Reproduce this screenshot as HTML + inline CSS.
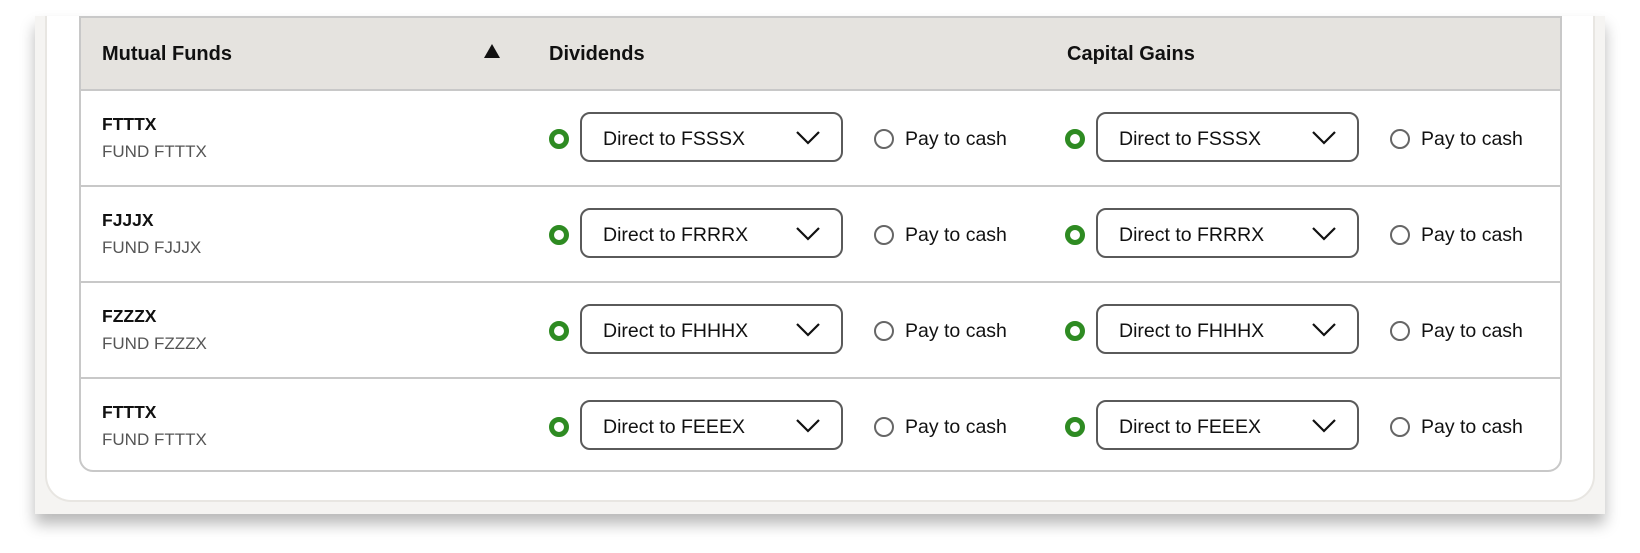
<!DOCTYPE html>
<html><head><style>
*{box-sizing:border-box;margin:0;padding:0}
body{width:1640px;height:553px;background:#fff;position:relative;overflow:hidden;font-family:"Liberation Sans",sans-serif;color:#111}
.panel{position:absolute;left:35px;top:16px;width:1570px;height:498px;background:#f5f4f2;box-shadow:0 10px 14px rgba(0,0,0,0.28)}
.card{position:absolute;left:45px;top:16px;width:1550px;height:486px;background:#fff;border:2px solid #e8e6e2;border-top:none;border-radius:0 0 26px 26px}
.table{position:absolute;left:79px;top:16px;width:1483px;height:456px;border:2px solid #c8c8c8;border-radius:0 0 14px 14px;overflow:hidden}
.hdr{position:absolute;left:0;top:0;width:100%;height:73px;background:#e5e3df;border-bottom:2px solid #c8c8c8}
.h{position:absolute;top:25px;font-size:20px;font-weight:bold}
.row{position:absolute;left:0;width:100%;height:96px;border-bottom:2px solid #c8c8c8}
.row:last-child{border-bottom:none}
.tk{position:absolute;left:21px;top:23px;font-size:17.5px;font-weight:bold}
.fn{position:absolute;left:21px;top:51px;font-size:17px;color:#555}
.rg{position:absolute;width:20px;height:20px;border-radius:50%;border:5.5px solid #2e8b22;top:38px}
.rw{position:absolute;width:20px;height:20px;border-radius:50%;border:2px solid #666;top:38px}
.sel{position:absolute;width:263px;height:50px;border:2px solid #5a5a5a;border-radius:10px;top:21px}
.sel span{position:absolute;left:21px;top:14px;font-size:19.5px}
.sel svg{position:absolute;right:20px;top:16px}
.pt{position:absolute;top:37px;font-size:19.5px}
</style></head><body>
<div class="panel"></div>
<div class="card"></div>
<div class="table">
<div class="hdr">
<div class="h" style="left:21px">Mutual Funds</div>
<svg style="position:absolute;left:403px;top:26px" width="16" height="14"><polygon points="8,0 16,14 0,14" fill="#111"/></svg>
<div class="h" style="left:468px">Dividends</div>
<div class="h" style="left:986px">Capital Gains</div>
</div>
<div class="row" style="top:73px"><div class="tk">FTTTX</div><div class="fn">FUND FTTTX</div>
<div class="rg" style="left:468px"></div><div class="sel" style="left:499px"><span>Direct to FSSSX</span><svg width="26" height="16"><path d="M2 2 L13 13 L24 2" fill="none" stroke="#111" stroke-width="2.2"/></svg></div><div class="rw" style="left:793px"></div><div class="pt" style="left:824px">Pay to cash</div>
<div class="rg" style="left:984px"></div><div class="sel" style="left:1015px"><span>Direct to FSSSX</span><svg width="26" height="16"><path d="M2 2 L13 13 L24 2" fill="none" stroke="#111" stroke-width="2.2"/></svg></div><div class="rw" style="left:1309px"></div><div class="pt" style="left:1340px">Pay to cash</div></div>
<div class="row" style="top:169px"><div class="tk">FJJJX</div><div class="fn">FUND FJJJX</div>
<div class="rg" style="left:468px"></div><div class="sel" style="left:499px"><span>Direct to FRRRX</span><svg width="26" height="16"><path d="M2 2 L13 13 L24 2" fill="none" stroke="#111" stroke-width="2.2"/></svg></div><div class="rw" style="left:793px"></div><div class="pt" style="left:824px">Pay to cash</div>
<div class="rg" style="left:984px"></div><div class="sel" style="left:1015px"><span>Direct to FRRRX</span><svg width="26" height="16"><path d="M2 2 L13 13 L24 2" fill="none" stroke="#111" stroke-width="2.2"/></svg></div><div class="rw" style="left:1309px"></div><div class="pt" style="left:1340px">Pay to cash</div></div>
<div class="row" style="top:265px"><div class="tk">FZZZX</div><div class="fn">FUND FZZZX</div>
<div class="rg" style="left:468px"></div><div class="sel" style="left:499px"><span>Direct to FHHHX</span><svg width="26" height="16"><path d="M2 2 L13 13 L24 2" fill="none" stroke="#111" stroke-width="2.2"/></svg></div><div class="rw" style="left:793px"></div><div class="pt" style="left:824px">Pay to cash</div>
<div class="rg" style="left:984px"></div><div class="sel" style="left:1015px"><span>Direct to FHHHX</span><svg width="26" height="16"><path d="M2 2 L13 13 L24 2" fill="none" stroke="#111" stroke-width="2.2"/></svg></div><div class="rw" style="left:1309px"></div><div class="pt" style="left:1340px">Pay to cash</div></div>
<div class="row" style="top:361px"><div class="tk">FTTTX</div><div class="fn">FUND FTTTX</div>
<div class="rg" style="left:468px"></div><div class="sel" style="left:499px"><span>Direct to FEEEX</span><svg width="26" height="16"><path d="M2 2 L13 13 L24 2" fill="none" stroke="#111" stroke-width="2.2"/></svg></div><div class="rw" style="left:793px"></div><div class="pt" style="left:824px">Pay to cash</div>
<div class="rg" style="left:984px"></div><div class="sel" style="left:1015px"><span>Direct to FEEEX</span><svg width="26" height="16"><path d="M2 2 L13 13 L24 2" fill="none" stroke="#111" stroke-width="2.2"/></svg></div><div class="rw" style="left:1309px"></div><div class="pt" style="left:1340px">Pay to cash</div></div>
</div>
</body></html>
